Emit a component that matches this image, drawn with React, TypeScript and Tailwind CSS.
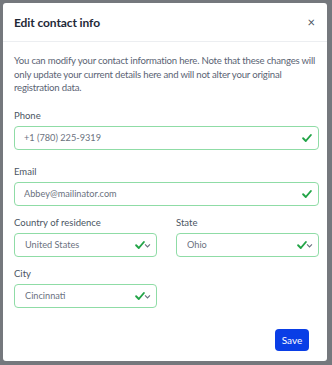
import { useState } from 'react';

const Check = ({ chevron }: { chevron?: boolean }) => (
  <span className="flex items-center">
    <svg className="h-[12px] w-[12px] text-[#22a447]" viewBox="0 0 20 20" fill="none" stroke="currentColor" strokeWidth={3.2} strokeLinecap="round" strokeLinejoin="round">
      <path d="M3.5 10.5l4.5 4.5 8.5-10" />
    </svg>
    {chevron && (
      <svg className="-ml-[2px] mt-[1px] h-[7px] w-[7px] text-[#6b7280]" viewBox="0 0 10 10" fill="none" stroke="currentColor" strokeWidth={1.6}>
        <path d="M1.5 3.5l3.5 3.5 3.5-3.5" />
      </svg>
    )}
  </span>
);

const Field = ({ label, value, select }: { label: string; value: string; select?: boolean }) => {
  const [val, setVal] = useState(value);
  return (
    <div>
      <label className="mb-[4px] block text-[9.5px] leading-[12px] text-[#4b5563]">{label}</label>
      <div className="flex h-[24px] items-center rounded-[4px] border border-[#8fdca6] bg-white pr-[5px]">
        <input
          value={val}
          onChange={(e) => setVal(e.target.value)}
          className={`min-w-0 flex-1 bg-transparent text-[9.2px] text-[#6b7280] outline-none ${select ? 'pl-[10px]' : 'pl-[9px]'}`}
        />
        <Check chevron={select} />
      </div>
    </div>
  );
};

export default function App() {
  return (
    <div className="h-[365px] w-[332px] bg-[#75787d] pl-[3px] pt-[3px] font-['Lato',sans-serif]">
      <div className="flex h-[358px] w-[324px] flex-col rounded-[3px] bg-white">
        <div className="flex h-[39px] items-center justify-between border-b border-[#eceef1] pl-[11px] pr-[12px] pt-[1px]">
          <h2 className="text-[12px] font-bold tracking-[-0.1px] text-[#1f2937]">Edit contact info</h2>
          <button className="text-[13px] leading-none text-[#4b5563]">×</button>
        </div>
        <div className="flex flex-1 flex-col pl-[11px] pr-[8px] pt-[12px]">
          <p className="text-[9.6px] leading-[13.5px] tracking-[-0.2px] text-[#5b6474]">
            You can modify your contact information here. Note that these changes will only update your current details here and will not alter your original registration data.
          </p>
          <div className="mt-[15px] flex flex-col gap-[16px]">
            <Field label="Phone" value="+1 (780) 225-9319" />
            <Field label="Email" value="Abbey@mailinator.com" />
          </div>
          <div className="mt-[11px] grid grid-cols-[143px_143px] gap-x-[19px] gap-y-[11px]">
            <Field label="Country of residence" value="United States" select />
            <Field label="State" value="Ohio" select />
            <Field label="City" value="Cincinnati" select />
          </div>
          <div className="mt-auto flex justify-end pb-[10px] pr-[10px]">
            <button className="h-[22px] w-[34px] rounded-[4px] bg-[#0a3ee6] text-[10px] text-white">Save</button>
          </div>
        </div>
      </div>
    </div>
  );
}
